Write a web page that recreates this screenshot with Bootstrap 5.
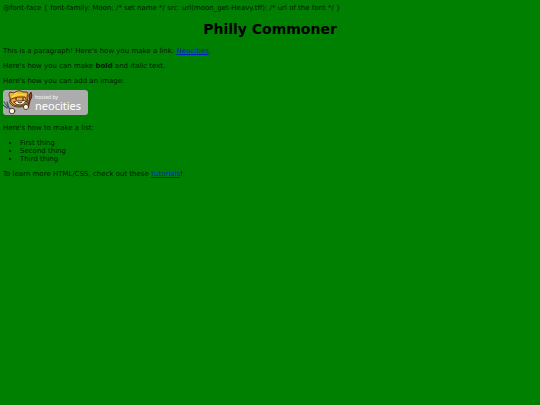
<!DOCTYPE html>
<html lang="en">
<head>
<meta charset="utf-8">
<meta name="viewport" content="width=device-width, initial-scale=1">
<title>Philly Commoner</title>
<link href="https://cdn.jsdelivr.net/npm/bootstrap@5.3.0/dist/css/bootstrap.min.css" rel="stylesheet">
<style>
body { background: #008000; color: #001800; font: 7px/8px "DejaVu Sans", sans-serif; padding: 4px 3px; }
h1 { font-size: 14px; line-height: 16px; margin: 9px 0 10px; color: #000; }
p { margin-bottom: 7px; }
.logo-row { margin: -2px 0 9px; }
.things { padding-left: 17px; margin-bottom: 7px; }
a, a:hover { color: #0020c0; }
.host-logo { width: 85px; height: 25px; }
</style>
</head>
<body>
<div>@font-face { font-family: Moon; /* set name */ src: url(moon_get-Heavy.tff); /* url of the font */ }</div>
<main>
<h1 class="text-center fw-bold">Philly Commoner</h1>
<p>This is a paragraph! Here's how you make a link: <a href="#">Neocities</a>.</p>
<p>Here's how you can make <strong>bold</strong> and <em>italic</em> text.</p>
<p>Here's how you can add an image:</p>
<p class="logo-row">
<svg class="host-logo d-block" viewBox="0 0 85 25" role="img" aria-label="Hosted by Neocities">
<rect width="85" height="25" rx="3" fill="#acacac"/>
<g stroke="#30200e" stroke-width=".8" stroke-linejoin="round" stroke-linecap="round">
<path d="M7 8Q5 4 7 2l4 1q5-4 9-1l4 0q2 2 0 5l1 5q-2 5-9 5T7 13Z" fill="#efb42b"/>
<path d="M8 9q7-3 14-2l2 4q-2 5-8 5-6 0-8-4Z" fill="#f5a249"/>
<path d="M11 12q3-2 6-1 3-1 6 0-2 4-6 4-5 0-6-3Z" fill="#fff4dc"/>
<path d="M9 7q6-4 13-2M11 4l3-1" fill="none" stroke="#f9df52" stroke-width="1.3"/>
<path d="m13 8 0 2m7-2v2m-5 2 2 1 2-1" fill="none" stroke-width="1"/>
<path d="m1 12 4 5 4 3M0 15l4 3 2 0-2-6" fill="none" stroke="#45545d" stroke-width="1.2"/>
<path d="m25 17 2-8" fill="none" stroke="#6b241c" stroke-width="1.8"/>
<path d="M26 8q-1-3 2-6 2 4 0 7Z" fill="#a83822"/>
<circle cx="9" cy="21" r="2.8" fill="#fff3dd"/>
<circle cx="23" cy="17" r="2.6" fill="#fff3dd"/>
</g>
<g fill="#fff"><text x="32" y="9" font-size="5" font-family="Open Sans, sans-serif">hosted by</text><text x="32" y="20" font-size="11" font-family="Noto Sans, sans-serif">neocities</text></g>
</svg>
</p>
<p>Here's how to make a list:</p>
<ul class="things">
<li>First thing</li>
<li>Second thing</li>
<li>Third thing</li>
</ul>
<p>To learn more HTML/CSS, check out these <a href="#">tutorials</a>!</p>
</main>
<script src="https://cdn.jsdelivr.net/npm/bootstrap@5.3.0/dist/js/bootstrap.bundle.min.js"></script>
</body>
</html>
